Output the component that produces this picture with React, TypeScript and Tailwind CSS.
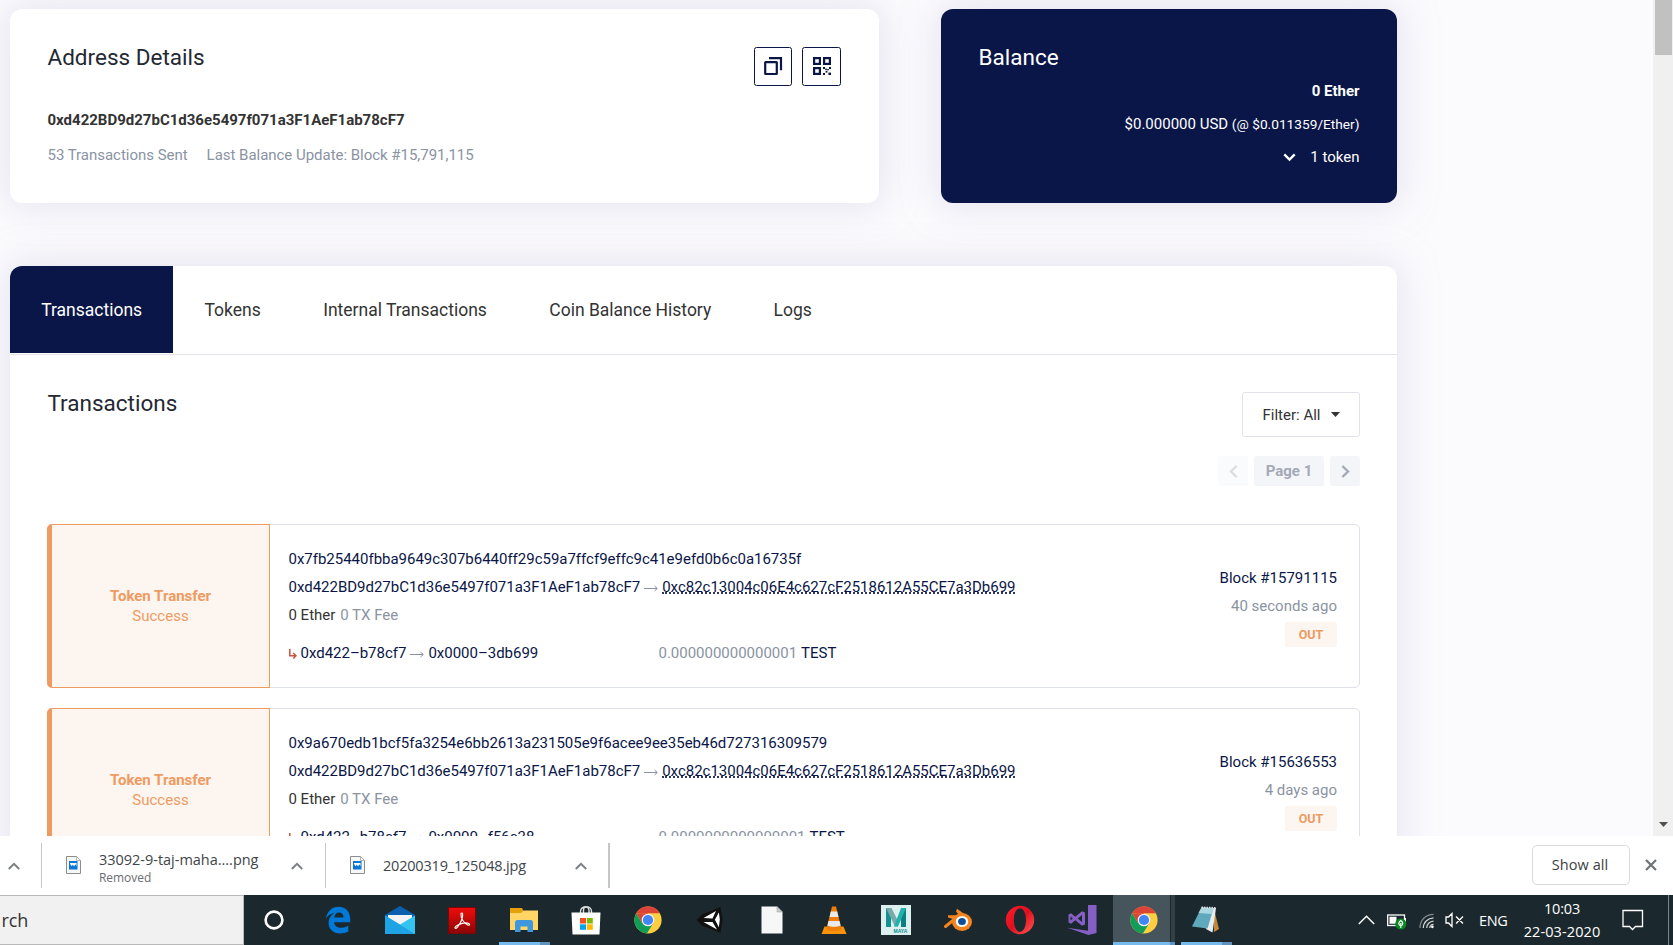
import React from "react";

type Transfer = {
  hash: string;
  from: string;
  to: string;
  shortFrom: string;
  shortTo: string;
  amount: string;
  block: string;
  age: string;
};

const transfers: Transfer[] = [
  {
    hash: "0x7fb25440fbba9649c307b6440ff29c59a7ffcf9effc9c41e9efd0b6c0a16735f",
    from: "0xd422BD9d27bC1d36e5497f071a3F1AeF1ab78cF7",
    to: "0xc82c13004c06E4c627cF2518612A55CE7a3Db699",
    shortFrom: "0xd422–b78cf7",
    shortTo: "0x0000–3db699",
    amount: "0.000000000000001",
    block: "Block #15791115",
    age: "40 seconds ago",
  },
  {
    hash: "0x9a670edb1bcf5fa3254e6bb2613a231505e9f6acee9ee35eb46d727316309579",
    from: "0xd422BD9d27bC1d36e5497f071a3F1AeF1ab78cF7",
    to: "0xc82c13004c06E4c627cF2518612A55CE7a3Db699",
    shortFrom: "0xd422–b78cf7",
    shortTo: "0x0000–f56c38",
    amount: "0.0000000000000001",
    block: "Block #15636553",
    age: "4 days ago",
  },
];

const tabs = ["Transactions", "Tokens", "Internal Transactions", "Coin Balance History", "Logs"];

function Arrow() {
  return (
    <svg className="ml-[4px] mr-[4px] mt-[12px]" width="14" height="7" viewBox="0 0 14 7" fill="none" stroke="#8a8fa3">
      <path d="M0 3.500h13M10.500 1l2.800 2.500L10.500 6" />
    </svg>
  );
}

function AddressCard() {
  return (
    <section className="flex h-[194px] w-[869px] justify-between rounded-[12px] bg-white pl-[37.5px] pr-[38.5px] shadow-[0_0_37px_0_rgba(202,199,226,0.5)]">
      <div className="flex flex-col whitespace-nowrap">
        <h1 className="mt-[34px] text-[22.5px] leading-[28px] text-[#242832]">Address Details</h1>
        <h3 className="mt-[35px] text-[15px] font-bold leading-[28px] text-[#333]">
          0xd422BD9d27bC1d36e5497f071a3F1AeF1ab78cF7
        </h3>
        <div className="mt-[7px] flex gap-[19px] text-[15px] leading-[28px] tracking-[-0.025px] text-[#8a93a2]">
          <span>53 Transactions Sent</span>
          <span>Last Balance Update: Block #15,791,115</span>
        </div>
      </div>
      <div className="mt-[38px] flex gap-[10px]">
        <button className="flex h-[39px] w-[38px] items-center justify-center rounded-[2.5px] border border-[#0a1647]">
          <svg className="-mt-px" width="20" height="20" viewBox="0 0 20 20" fill="none" stroke="#0a1647" strokeWidth="2.2">
            <rect x="2.2" y="6.2" width="11.6" height="11.8" rx=".4" />
            <path d="M6 2.200h12v12" />
          </svg>
        </button>
        <button className="flex h-[39px] w-[39px] items-center justify-center rounded-[2.5px] border border-[#0a1647]">
          <svg className="-mt-px ml-px" width="20" height="20" viewBox="0 0 20 20" fill="none" stroke="#0a1647" strokeWidth="2.2">
            <rect x="2.1" y="2.1" width="5.8" height="5.8" />
            <rect x="12.1" y="2.1" width="5.8" height="5.8" />
            <rect x="2.1" y="12.1" width="5.8" height="5.8" />
            <g fill="#0a1647" stroke="none">
              <rect x="11" y="11" width="2" height="2" />
              <rect x="17" y="11" width="2" height="2" />
              <rect x="13.2" y="12.6" width="1.6" height="1.6" />
              <rect x="15.2" y="13" width="1.6" height="1.4" />
              <rect x="13.6" y="15" width="1.8" height="1.6" />
              <rect x="11" y="17" width="2" height="2" />
              <rect x="16.4" y="16.6" width="2.6" height="2.4" />
            </g>
          </svg>
        </button>
      </div>
    </section>
  );
}

function BalanceCard() {
  return (
    <section className="flex h-[194px] w-[456px] flex-col whitespace-nowrap rounded-[12px] bg-[#0a1647] px-[37.5px] text-white shadow-[0_0_37px_0_rgba(202,199,226,0.5)]">
      <h2 className="mt-[34px] text-[22.5px] leading-[28px]">Balance</h2>
      <div className="mt-[4px] flex flex-col items-end text-[15px] leading-[33px]">
        <span className="font-bold">0 Ether</span>
        <span>
          $0.000000 USD <span className="text-[13.7px]">(@ $0.011359/Ether)</span>
        </span>
        <span className="flex items-center gap-[14px]">
          <svg width="13" height="9" viewBox="0 0 14 10" fill="none" stroke="#fff" strokeWidth="2.6">
            <path d="M1.2 1.6 7 7.4l5.8-5.8" />
          </svg>
          1 token
        </span>
      </div>
    </section>
  );
}

function TransferTile({ t }: { t: Transfer }) {
  return (
    <article className="flex h-[164px] shrink-0 whitespace-nowrap rounded-[5px] border border-[#dfe1e8] text-[15px] text-[#0a1647]">
      <div className="-my-px -ml-px flex w-[223px] flex-col items-center justify-center rounded-l-[5px] border border-l-[5px] border-[#ee9b62] bg-[#fdf5f0] leading-[20px] text-[#ee9b62]">
        <span className="font-bold">Token Transfer</span>
        <span>Success</span>
      </div>
      <div className="ml-[18.5px] flex grow flex-col pt-[20px] leading-[28px] tracking-[-0.015px]">
        <span>{t.hash}</span>
        <span className="flex h-[28px] items-start">
          {t.from}
          <Arrow />
          <span className="h-[21px] border-b-2 border-dotted border-[#2b356a]">{t.to}</span>
        </span>
        <span className="flex gap-[5px]">
          <span className="text-[#333]">0 Ether</span>
          <span className="text-[#8a93a2]">0 TX Fee</span>
        </span>
        <div className="mt-[10px] flex">
          <span className="flex w-[370px] items-start">
            <svg className="mr-[4px] mt-[10px]" width="8" height="10" viewBox="0 0 8 10" fill="none" stroke="#c9543f" strokeWidth="1.500">
              <path d="M.8 0v6.800H6.500M4.300 4l2.700 2.800-2.700 2.700" />
            </svg>
            {t.shortFrom}
            <Arrow />
            {t.shortTo}
          </span>
          <span className="text-[#8a93a2]">{t.amount}</span>
          <span className="ml-[4px]">TEST</span>
        </div>
      </div>
      <div className="mr-[22px] flex flex-col items-end pt-[39px] leading-[28px]">
        <span>{t.block}</span>
        <span className="text-[#8a93a2]">{t.age}</span>
        <span className="mt-[2px] flex h-[25px] w-[52px] items-center justify-center rounded-[2.5px] bg-[#fdf5f0] text-[12.5px] font-bold leading-[25px] text-[#ee9b62]">
          OUT
        </span>
      </div>
    </article>
  );
}

function ExplorerPage() {
  return (
    <main className="flex h-[836px] shrink-0 overflow-hidden bg-[#fbfafd]">
      <div className="flex w-[1653px] flex-col overflow-hidden pl-[10px] pt-[9px]">
        <div className="flex w-[1387px] shrink-0 justify-between">
          <AddressCard />
          <BalanceCard />
        </div>
        <section className="mt-[63px] flex w-[1387px] shrink-0 flex-col rounded-t-[12px] bg-white shadow-[0_0_37px_0_rgba(202,199,226,0.5)]">
          <nav className="flex h-[89px] overflow-hidden whitespace-nowrap rounded-tl-[12px] border-b border-[#e2e1ec] text-[17.5px] leading-[88px] text-[#333]">
            {tabs.map((tab, i) => (
              <a
                key={tab}
                className={
                  i === 0
                    ? "h-[87px] bg-[#0a1647] px-[31.2px] text-white"
                    : "h-[87px] px-[31.2px]"
                }
              >
                {tab}
              </a>
            ))}
          </nav>
          <div className="flex flex-col px-[37px]">
            <div className="flex h-[169px] justify-between">
              <h2 className="ml-[.5px] mt-[34px] text-[22.5px] leading-[28px] text-[#242832]">Transactions</h2>
              <div className="flex flex-col items-end pt-[37px]">
                <button className="flex h-[45px] w-[118px] items-center justify-between whitespace-nowrap rounded-[2.5px] border border-[#e2e1ec] pl-[19.5px] pr-[19px] pt-px text-[15px] text-[#333]">
                  Filter: All
                  <svg className="-mt-px" width="9" height="5" viewBox="0 0 9 5" fill="#333">
                    <path d="M0 0h9L4.500 5z" />
                  </svg>
                </button>
                <div className="mt-[19px] flex h-[30px] gap-[6px] text-[15px] font-bold text-[#a3a9b5]">
                  <span className="flex w-[30px] items-center justify-center rounded-[2.5px] bg-[#fafbfc]">
                    <svg width="9" height="13" viewBox="0 0 9 13" fill="none" stroke="#dcdde2" strokeWidth="2.4">
                      <path d="M7.600 1 2 6.500l5.600 5.500" />
                    </svg>
                  </span>
                  <span className="flex w-[70px] items-center justify-center whitespace-nowrap rounded-[2.5px] bg-[#f4f5f9]">
                    Page 1
                  </span>
                  <span className="flex w-[30px] items-center justify-center rounded-[2.5px] bg-[#f4f5f9]">
                    <svg width="9" height="13" viewBox="0 0 9 13" fill="none" stroke="#a3a9b5" strokeWidth="2.4">
                      <path d="M1.400 1 7 6.500 1.400 12" />
                    </svg>
                  </span>
                </div>
              </div>
            </div>
            <div className="flex flex-col gap-[20px]">
              {transfers.map((t) => (
                <TransferTile key={t.hash} t={t} />
              ))}
            </div>
          </div>
        </section>
      </div>
      <div className="flex w-[20px] flex-col items-center justify-between bg-[#f0f0f0] pb-[9px]">
        <div className="ml-[1px] h-[55px] w-[17px] bg-[#c1c1c1]" />
        <svg width="9" height="5" viewBox="0 0 9 5" fill="#505050">
          <path d="M0 0h9L4.500 5z" />
        </svg>
      </div>
    </main>
  );
}

function Caret() {
  return (
    <svg width="12" height="8" viewBox="0 0 12 8" fill="none" stroke="#7d8084" strokeWidth="2">
      <path d="M.8 7 6 1.800 11.200 7" />
    </svg>
  );
}

function ImageFile() {
  return (
    <svg className="-mt-[2px]" width="15" height="18" viewBox="0 0 15 18">
      <path d="M.5.500h10l4 4v13H.5z" fill="#f7f7f7" stroke="#8d8d8d" />
      <path d="M10.500.500v4h4z" fill="#fff" stroke="#a5a5a5" strokeWidth=".8" />
      <rect x="3" y="5" width="8.500" height="8.500" fill="#0a78d7" />
      <path d="M4 7h6.500v3.200l-1.200-2-1.200 2.400-1.300-2-1 1.600L4 8z" fill="#fff" />
    </svg>
  );
}

function DownloadsBar() {
  return (
    <div className="flex h-[59px] shrink-0 items-center whitespace-nowrap bg-white font-['Open_Sans'] text-[#414549]">
      <div className="flex h-[45px] w-[41px] items-center pl-[8px]">
        <Caret />
      </div>
      <div className="flex h-[45px] w-[284px] items-center border-l border-[#c6c7c9] pl-[24px]">
        <ImageFile />
        <div className="ml-[18px] flex w-[192px] flex-col pt-[4px]">
          <span className="text-[14.500px] leading-[19px] tracking-[-0.02px]">33092-9-taj-maha....png</span>
          <span className="text-[12px] leading-[17px] tracking-[-0.05px] text-[#6a6d71]">Removed</span>
        </div>
        <Caret />
      </div>
      <div className="flex h-[45px] w-[283px] items-center border-l border-[#c6c7c9] pl-[24px]">
        <ImageFile />
        <span className="ml-[18px] w-[192px] pt-px text-[14.500px] tracking-[-0.2px]">20200319_125048.jpg</span>
        <Caret />
      </div>
      <div className="h-[45px] w-[2px] bg-[#c6c7c9]" />
      <div className="mb-[2px] ml-auto mr-[16px] flex items-center">
        <button className="h-[40px] w-[98px] rounded-[5px] border border-[#d9dbdf] pr-[2px] text-[14.500px] font-medium tracking-[0.05px] text-[#3c4043]">
          Show all
        </button>
        <svg className="ml-[15px]" width="12" height="12" viewBox="0 0 12 12" stroke="#6f7377" strokeWidth="2.2">
          <path d="M1 1l10 10M11 1 1 11" />
        </svg>
      </div>
    </div>
  );
}

function Chrome() {
  return (
    <svg width="28" height="28" viewBox="0 0 28 28">
      <circle cx="14" cy="14" r="13.600" fill="#ffcd40" />
      <path d="M2.200 7.200A13.600 13.600 0 0 1 25.800 7.200H14z" fill="#db4437" />
      <path d="M2.200 7.200 14 7.200l0 6.800-6 3z" fill="#db4437" />
      <path d="M2.200 7.200a13.600 13.600 0 0 0 10.600 20.350L19.500 17l-5.500 3-6-3z" fill="#0f9d58" />
      <circle cx="14" cy="14" r="6.300" fill="#f1f1f1" />
      <circle cx="14" cy="14" r="5.100" fill="#4285f4" />
    </svg>
  );
}

const taskIcons: React.ReactNode[] = [
  <svg width="22" height="22" viewBox="0 0 22 22" fill="none" stroke="#fff" strokeWidth="2.6">
    <circle cx="11" cy="11" r="8.400" />
  </svg>,
  <svg width="26" height="28" viewBox="0 0 26 28">
    <path
      d="M1 12.500C2 5.500 7 .8 13.600.8 21 .8 25.200 6.200 25.200 13v3.200H9.200c.2 3.800 3.400 5.600 7.100 5.600 2.700 0 5-.8 7-2v5.600c-2.300 1.300-5 2-8.200 2C8.300 27.400 3.600 23.200 3.600 17c0-4.600 2.300-7.900 6-9.900C5.600 7.700 2.900 9.600 1 12.500zm8.300-1.100h9.200c-.1-3-1.700-4.900-4.500-4.900-2.600 0-4.300 2-4.700 4.900z"
      fill="#0078d7"
    />
  </svg>,
  <svg width="30" height="28" viewBox="0 0 30 28">
    <path d="M0 9 15 0l15 9v6H0z" fill="#0a5fae" />
    <path d="M3 9h24v10H3z" fill="#f3f3f5" />
    <path d="M0 9.500 15 18.500 30 9.500V28H0z" fill="#35c3f2" />
    <path d="M0 9.500 30 28H0z" fill="#1fa3e4" />
  </svg>,
  <svg width="28" height="27" viewBox="0 0 28 27">
    <defs>
      <linearGradient id="pdf" x1="0" y1="0" x2="0" y2="1">
        <stop offset="0" stopColor="#f20c0c" />
        <stop offset="1" stopColor="#8a0505" />
      </linearGradient>
    </defs>
    <rect x=".5" y=".5" width="27" height="26" fill="url(#pdf)" stroke="#7c0606" />
    <path
      d="M13 6.500c1.600-1.500 2.200.8 1.200 4.500-1.200 4.300-4.300 9.800-6.300 10.400-1.700.3-1.200-2 2-3.500 3.500-1.600 8.600-2.300 10.900-1.500 1.800.8.500 2.400-1.600 1.400C16.500 16.500 12.300 11.500 13 6.500z"
      fill="none"
      stroke="#fff"
      strokeWidth="1.100"
    />
  </svg>,
  <svg width="28" height="24" viewBox="0 0 28 24">
    <path d="M0 0h12l1.500 3H28v7H0z" fill="#e3a007" />
    <path d="M0 5h11l2.500-2.500H28V22H0z" fill="#ffd666" />
    <path d="M5 24V14.500c0-1.600 1-2.500 2.500-2.500h13c1.500 0 2.500.9 2.500 2.500V24h-5.500v-5.500h-7V24z" fill="#3f97dd" />
  </svg>,
  <svg width="30" height="30" viewBox="0 0 30 30">
    <path d="M9.500 9V6.500c0-6.500 11-6.500 11 0V9M12.500 9V5c0-4 5-4 5.500 0v4" fill="none" stroke="#ddd" strokeWidth="1.400" />
    <path d="M.5 7.500h29L28.500 29.500h-27z" fill="#fff" />
    <path d="M9 13h6v5.500H9z" fill="#f25022" />
    <path d="M15.800 13h6v5.500h-6z" fill="#7fba00" />
    <path d="M9 19.300h6v5.500H9z" fill="#00a4ef" />
    <path d="M15.800 19.300h6v5.500h-6z" fill="#ffb900" />
  </svg>,
  <Chrome />,
  <svg width="28" height="28" viewBox="0 0 28 28">
    <path d="M.5 14 6 8.500 24.500 1l2 12.500-2 13.500L6 19.500z" fill="#111" />
    <path d="M7.500 12 20 5l-3.500 7.500zM18.800 13.500l4-7.500 1 7.500-1 8zM7.500 16h9l4.500 7.500z" fill="#fff" />
    <path d="M6.500 14h11l5-9M17.500 14l5 9" fill="none" stroke="#111" strokeWidth="1.800" />
  </svg>,
  <svg width="22" height="28" viewBox="0 0 22 28">
    <path d="M.5.500H16l5.500 5.500v21.500H.5z" fill="#f6f7f7" />
    <path d="M16 .5V6h5.500z" fill="#c9cccc" stroke="#999" strokeWidth=".5" />
  </svg>,
  <svg width="26" height="28" viewBox="0 0 26 28">
    <path d="M3.500 20.500h19L25.500 28H.5z" fill="#f7920b" />
    <path d="M11 .5h4L20.500 23c-2 2.500-13 2.500-15 0z" fill="#f07c0a" />
    <path d="M9.800 5.500h6.400l1.300 5.500h-9zM7.500 15h11l1.100 4.500c-3 1.700-10.200 1.700-13.200 0z" fill="#e9e9e9" />
  </svg>,
  <svg width="30" height="30" viewBox="0 0 30 30">
    <rect width="30" height="30" fill="#dcf0f0" />
    <path d="M5 3h5v19H5z" fill="#148f92" />
    <path d="M20 3h5v19h-5z" fill="#0d7f83" />
    <path d="M5 3h5.500L17 16v5.500h-3z" fill="#7ba9ab" />
    <path d="M20 3h5L17 21.500h-4z" fill="#20b2ad" />
    <text x="12.500" y="27.600" fontSize="5" fontWeight="700" fontFamily="Liberation Sans" fill="#0d8d90">
      MAYA
    </text>
  </svg>,
  <svg width="30" height="26" viewBox="0 0 30 26">
    <path d="M14 1.800 27 11 15 13.500 5 10.400V8.200h11.200L13 4.500z" fill="#f5831f" />
    <path d="M2.500 19.500 13.500 10.500" stroke="#f5831f" strokeWidth="3" strokeLinecap="round" />
    <ellipse cx="19" cy="15" rx="10" ry="9" fill="#f5831f" />
    <ellipse cx="19" cy="14.500" rx="6.200" ry="5.600" fill="#fff" />
    <ellipse cx="19" cy="14.500" rx="3.900" ry="3.600" fill="#0b4f9c" />
  </svg>,
  <svg width="30" height="30" viewBox="0 0 30 30">
    <defs>
      <linearGradient id="opera" x1="0" y1="0" x2="1" y2="1">
        <stop offset="0" stopColor="#ff1b2d" />
        <stop offset=".5" stopColor="#e0101f" />
        <stop offset="1" stopColor="#ff5a5a" />
      </linearGradient>
    </defs>
    <path
      d="M15 .8a14.200 14.200 0 1 0 0 28.400 14.200 14.200 0 1 0 0-28.400zm0 2.400c3.600 0 6 5.300 6 11.800s-2.400 11.800-6 11.800S8.800 21.500 8.800 15 11.400 3.200 15 3.200z"
      fill="url(#opera)"
      fillRule="evenodd"
    />
  </svg>,
  <svg width="30" height="30" viewBox="0 0 30 30" fill="#865fc5">
    <path d="M21 0h8.500v28L21.500 30 .3 22.800l20.700 3z" />
    <path
      d="M1.500 9.500 4 8.200l4.300 3.600L15 6.200l3 1.300v12l-3 1.300-6.700-5.600L4 18.800l-2.500-1.300zM3.500 11.500v4l2.300-2zM15 10l-4.300 3.500L15 17z"
      fillRule="evenodd"
    />
  </svg>,
  <Chrome />,
  <svg width="30" height="28" viewBox="0 0 30 28">
    <path d="M23 3l5 20-5 3z" fill="#c08a3a" />
    <path d="M10.500 1.500 25 2l-3.500 24.500L15 23z" fill="#e8eef0" />
    <path d="M10.500 1.500 22.500 2.500 16.500 22.500 1 20.500z" fill="#5fa9bd" />
    <path d="M10.500 1.500 22.500 2.500 21 8 7.500 7z" fill="#a9d8e3" />
    <path d="M10.500 1.500 25 2" stroke="#d7dde0" strokeWidth="2" strokeDasharray="1.500 1" />
  </svg>,
];

function cellClass(i: number) {
  if (i === 0) return "relative flex w-[64px] items-center justify-center pr-[2px]";
  if (i === 14) return "relative flex w-[62px] items-center justify-center bg-[#46555b]";
  return "relative flex w-[62px] items-center justify-center";
}

function Taskbar() {
  return (
    <footer className="flex h-[50px] shrink-0 whitespace-nowrap bg-[#1b292e] font-['Open_Sans'] text-white">
      <div className="flex w-[244px] shrink-0 items-center border border-l-0 border-[#b9b9b9] bg-[#f1f1f1] pl-[1.500px] text-[18px] tracking-[-0.1px] text-[#333]">
        rch
      </div>
      <div className="-ml-px flex">
        {taskIcons.map((icon, i) => (
          <div key={i} className={cellClass(i)}>
            {icon}
            {i === 14 && <span className="absolute right-0 top-0 h-full w-[5px] border-l border-[#1b292e] bg-[#334147]" />}
            {(i === 4 || i === 14 || i === 15) && (
              <span
                className={
                  i === 14
                    ? "absolute bottom-0 left-0 flex h-[3px] w-[62px] bg-[#76b9ed]"
                    : "absolute bottom-0 left-[6px] flex h-[3px] w-[51px] bg-[#76b9ed]"
                }
              >
                <span className={i === 14 ? "ml-auto w-[5px] bg-[#5f93bd]" : "ml-auto w-[10px] bg-[#5f93bd]"} />
              </span>
            )}
          </div>
        ))}
      </div>
      <div className="ml-auto flex items-center">
        <svg width="17" height="10" viewBox="0 0 17 10" fill="none" stroke="#fff" strokeWidth="1.500">
          <path d="M.8 9 8.500 1.300 16.200 9" />
        </svg>
        <svg className="ml-[12px] mt-[4px]" width="20" height="16" viewBox="0 0 20 16">
          <rect x=".7" y="1" width="16.800" height="10.500" fill="none" stroke="#fff" strokeWidth="1.300" />
          <path d="M2.500 2.800h7v7h-7zM17.800 4H19v4h-1.200z" fill="#fff" />
          <circle cx="13.800" cy="10" r="5.600" fill="#0b8a1c" />
          <path d="M13.800 6.500c2.600 1.600 2.600 4.500 0 5.500-2.600-1-2.600-3.900 0-5.500zM13.800 9v5" fill="none" stroke="#fff" strokeWidth="1.200" />
        </svg>
        <svg className="ml-[12px] mt-[2px]" width="16" height="16" viewBox="0 0 17 16" fill="none" stroke="#fff" strokeWidth="1.300">
          <path d="M1 15.500C1 7 7 1 15.500 1" opacity=".45" />
          <path d="M4.600 15.500c0-6 4.500-10.500 10.900-10.800M8.200 15.500c0-4 3-7.100 7.300-7.300M11.500 15.500c0-2 1.600-3.800 4-3.900" opacity=".8" />
          <circle cx="14.200" cy="14.200" r="1.400" fill="#fff" stroke="none" />
        </svg>
        <svg className="ml-[10px]" width="20" height="16" viewBox="0 0 20 16" fill="none" stroke="#fff" strokeWidth="1.300">
          <path d="M1 5h2.500L7 1.500v13L3.500 11H1zM11 4.500l7 7M18 4.500l-7 7" />
        </svg>
        <span className="ml-[14px] w-[66px] pt-px text-[14.500px] tracking-[-0.4px]">ENG</span>
        <div className="-ml-[22px] flex w-[78px] flex-col items-center text-[14.500px] leading-[23px]">
          <span className="tracking-[-0.2px]">10:03</span>
          <span className="tracking-[0.1px]">22-03-2020</span>
        </div>
        <svg className="ml-[21px]" width="22" height="22" viewBox="0 0 22 22" fill="none" stroke="#fff" strokeWidth="1.300">
          <path d="M1 1.500h19.500v16H13.500l-3 3-3-3H1z" />
        </svg>
        <div className="ml-[24px] mr-[4px] h-[50px] w-px bg-[#7b868a]" />
      </div>
    </footer>
  );
}

export default function App() {
  return (
    <div className="flex h-[945px] w-[1673px] flex-col overflow-hidden bg-white font-['Roboto',sans-serif]">
      <ExplorerPage />
      <DownloadsBar />
      <Taskbar />
    </div>
  );
}
